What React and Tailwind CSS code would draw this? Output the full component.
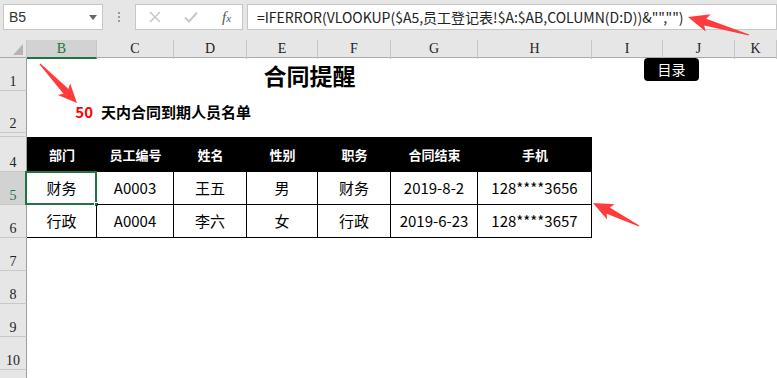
import React from "react";

const COLS = "grid grid-cols-[27px_70px_77px_73px_71px_73px_87px_114px_71px_72px_1fr]";
const LETTERS = ["B", "C", "D", "E", "F", "G", "H", "I", "J", "K"];
const CJK = "font-['Noto_Sans_CJK_SC',sans-serif]";
const HEAD = "font-['Liberation_Serif',serif]";

const headers = ["部门", "员工编号", "姓名", "性别", "职务", "合同结束", "手机"];
const rows = [
  ["财务", "A0003", "王五", "男", "财务", "2019-8-2", "128****3656"],
  ["行政", "A0004", "李六", "女", "行政", "2019-6-23", "128****3657"],
];

function arrow(x1, y1, x2, y2, h, w, s) {
  const L = Math.hypot(x2 - x1, y2 - y1);
  const ux = (x2 - x1) / L, uy = (y2 - y1) / L;
  const vx = -uy, vy = ux;
  const p = (a, b) => `${x1 + ux * a + vx * b},${y1 + uy * a + vy * b}`;
  return [p(0, -0.6), p(L - h, -s / 2), p(L - h - 3, -w / 2), p(L, 0), p(L - h - 3, w / 2), p(L - h, s / 2), p(0, 0.6)].join(" ");
}

function RowHead({ n, selected, h }) {
  return (
    <div
      className={`${HEAD} ${h} overflow-hidden flex items-end justify-center text-[14px] leading-[17px] border-r border-r-[#9e9e9e] border-b border-b-[#c8c8c8] ${
        selected ? "bg-[#d2d2d2] text-[#217346]" : "bg-[#e6e6e6] text-[#222]"
      }`}
    >
      {n}
    </div>
  );
}

function Toolbar() {
  return (
    <div className="h-[40px] bg-[#e6e6e6] flex items-start pt-[4px] pl-[3px]">
      <div className="w-[100px] h-[26px] bg-white border border-[#c6c6c6] flex items-center justify-between pl-[5px] pr-[5px]">
        <span className="font-['Liberation_Sans',sans-serif] text-[14px] text-[#333]">B5</span>
        <svg width="8" height="5" viewBox="0 0 8 5"><path d="M0 0h8L4 5z" fill="#666" /></svg>
      </div>
      <div className="w-[32px] h-[26px] flex flex-col items-center justify-center gap-[2px]">
        <span className="w-[2px] h-[2px] bg-[#999]" />
        <span className="w-[2px] h-[2px] bg-[#999]" />
        <span className="w-[2px] h-[2px] bg-[#999]" />
      </div>
      <div className="w-[108px] h-[26px] bg-white border border-[#c6c6c6] flex items-center">
        <svg className="ml-[13px]" width="12" height="12" viewBox="0 0 12 12">
          <path d="M1 1l10 10M11 1L1 11" stroke="#c8c8c8" strokeWidth="1.6" />
        </svg>
        <svg className="ml-[23px]" width="14" height="12" viewBox="0 0 14 12">
          <path d="M1 6.5l4 4L13 1.5" stroke="#c8c8c8" strokeWidth="2" fill="none" />
        </svg>
        <span className="ml-[24px] font-['Liberation_Serif',serif] italic text-[15px] text-[#555] leading-none">
          f<span className="text-[11px]">x</span>
        </span>
      </div>
      <div className="ml-[4px] flex-1 h-[26px] bg-white border border-[#c6c6c6] flex items-center pl-[9px]">
        <span className={`${CJK} text-[14px] text-[#222] whitespace-nowrap`}>
          =IFERROR(VLOOKUP($A5,员工登记表!$A:$AB,COLUMN(D:D))&amp;"","")
        </span>
      </div>
    </div>
  );
}

function ColumnHeader() {
  return (
    <div className={`${COLS} h-[18px] bg-[#e6e6e6] border-b border-[#ababab]`}>
      <div className="relative border-r border-[#c6c6c6]">
        <svg className="absolute left-[13px] top-[4px]" width="10" height="11" viewBox="0 0 10 11">
          <path d="M10 0v11H0z" fill="#b5b5b5" />
        </svg>
      </div>
      {LETTERS.map((l, i) => (
        <div
          key={l}
          className={`${HEAD} text-[14px] leading-[17px] text-center border-r border-[#c6c6c6] ${
            i === 0 ? "bg-[#d2d2d2] text-[#217346] border-b-2 border-b-[#217346]" : "text-[#222]"
          }`}
        >
          {l}
        </div>
      ))}
    </div>
  );
}

export default function App() {
  return (
    <div className="w-[777px] h-[378px] overflow-hidden relative bg-white">
      <Toolbar />
      <ColumnHeader />

      {/* row 1 */}
      <div className={`${COLS} h-[33px] relative`}>
        <RowHead n="1" h="h-[33px]" />
        <div className={`col-span-7 flex items-center justify-center ${CJK} font-bold text-[23px] text-black`}>
          合同提醒
        </div>
        <button className={`absolute left-[644px] top-[0px] w-[55px] h-[23px] bg-black rounded-[4px] text-white text-[14px] ${CJK} leading-[23px]`}>
          目录
        </button>
      </div>

      {/* row 2 */}
      <div className={`${COLS} h-[42px]`}>
        <RowHead n="2" h="h-[42px]" />
        <div className={`flex items-center justify-end pr-[4px] ${CJK} font-bold text-[15px] text-[#ff0000]`}>50</div>
        <div className={`col-span-6 flex items-center pl-[4px] ${CJK} font-bold text-[15px] text-black whitespace-nowrap`}>
          天内合同到期人员名单
        </div>
      </div>

      {/* row 3, nearly hidden */}
      <div className={`${COLS} h-[4px]`}>
        <RowHead n="" h="h-[4px]" />
      </div>

      {/* row 4 - table head */}
      <div className={`${COLS} h-[35px]`}>
        <RowHead n="4" h="h-[35px]" />
        {headers.map((t) => (
          <div key={t} className={`bg-black text-white font-bold text-[13px] ${CJK} flex items-center justify-center`}>
            {t}
          </div>
        ))}
      </div>

      {rows.map((r, ri) => (
        <div key={ri} className={`${COLS} h-[33px]`}>
          <RowHead n={String(ri + 5)} h="h-[33px]" selected={ri === 0} />
          {r.map((c, ci) => (
            <div
              key={ci}
              className={`relative border-b border-r border-black ${CJK} text-[15px] text-black flex items-center justify-center`}
            >
              {c}
              {ri === 0 && ci === 0 && (
                <>
                  <span className="absolute -left-[2px] -top-[1px] -right-[1px] -bottom-[1px] border-2 border-[#217346]" />
                  <span className="absolute -right-[3px] -bottom-[3px] w-[5px] h-[5px] bg-[#217346] border border-white" />
                </>
              )}
            </div>
          ))}
        </div>
      ))}

      {["7", "8", "9", "10", ""].map((n, i) => (
        <div key={i} className={`${COLS} h-[33px]`}>
          <RowHead n={n} h="h-[33px]" />
        </div>
      ))}

      <svg className="absolute left-0 top-0 pointer-events-none" width="777" height="378">
        <polygon points={arrow(40, 64, 77, 103, 16, 17, 7)} fill="#ff3c3c" />
        <polygon points={arrow(749, 35, 688, 17, 18, 18, 7)} fill="#ff3c3c" />
        <polygon points={arrow(639, 226, 593, 203, 17, 17, 7)} fill="#ff3c3c" />
      </svg>
    </div>
  );
}
